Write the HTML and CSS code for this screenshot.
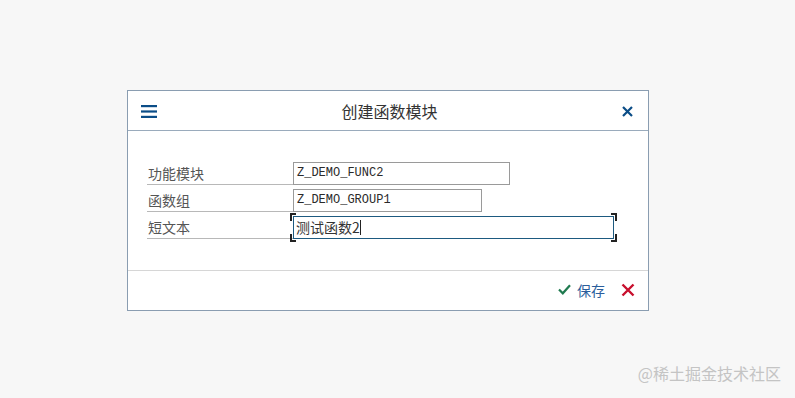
FILE: index.html
```html
<!DOCTYPE html>
<html lang="zh">
<head>
<meta charset="utf-8">
<title>创建函数模块</title>
<link rel="stylesheet" href="styles.css">
</head>
<body>
<div class="dialog">
  <div class="header">
    <svg class="menu" width="16" height="13" viewBox="0 0 16 13"><rect x="0" y="0" width="16" height="2.2" fill="#0b4d87"/><rect x="0" y="5.4" width="16" height="2.2" fill="#0b4d87"/><rect x="0" y="10.8" width="16" height="2.2" fill="#0b4d87"/></svg>
    <div class="title">创建函数模块</div>
    <svg class="close" width="11" height="11" viewBox="0 0 11 11"><path d="M1 1L10 10M10 1L1 10" stroke="#0b4d87" stroke-width="2.2" fill="none"/></svg>
  </div>
  <div class="content">
    <div class="row">
      <div class="label">功能模块</div>
      <div class="input w1">Z_DEMO_FUNC2</div>
    </div>
    <div class="row">
      <div class="label">函数组</div>
      <div class="input w2">Z_DEMO_GROUP1</div>
    </div>
    <div class="row">
      <div class="label">短文本</div>
      <div class="input w3 focus"><span class="cjk">测试函数2</span><span class="caret"></span>
        <i class="br tl"></i><i class="br tr"></i><i class="br bl"></i><i class="br bri"></i>
      </div>
    </div>
  </div>
  <div class="footer">
    <div class="save">
      <svg width="13" height="11" viewBox="0 0 13 11"><path d="M1 5.5L4.8 9.3L12 1.2" stroke="#1f7a4f" stroke-width="2.2" fill="none"/></svg>
      <span>保存</span>
    </div>
    <svg class="cancel" width="14" height="14" viewBox="0 0 14 14"><path d="M1.5 1.5L12.5 12.5M12.5 1.5L1.5 12.5" stroke="#c8102e" stroke-width="2.4" fill="none"/></svg>
  </div>
</div>
<div class="watermark">@稀土掘金技术社区</div>
</body>
</html>
```
FILE: styles.css
```css
html, body {
  margin: 0;
  padding: 0;
}
body {
  background: #f7f7f7;
  width: 795px;
  height: 398px;
  position: relative;
  overflow: hidden;
  font-family: "Noto Sans CJK SC", "Noto Sans", sans-serif;
  padding-top: 90px;
  padding-left: 127px;
  box-sizing: border-box;
}
.dialog {
  width: 522px;
  height: 221px;
  box-sizing: border-box;
  border: 1px solid #8a9db1;
  background: #ffffff;
  display: flex;
  flex-direction: column;
}
.header {
  height: 40px;
  box-sizing: border-box;
  border-bottom: 1px solid #9aabbc;
  display: flex;
  align-items: center;
  padding: 0 0 0 13px;
}
.menu {
  display: block;
  margin-top: 1px;
}
.title {
  flex: 1;
  text-align: center;
  font-size: 16px;
  color: #333;
}
.close {
  display: block;
  margin-right: 15px;
  margin-top: 2px;
}
.content {
  flex: 1;
  padding: 31px 0 0 19px;
  display: flex;
  flex-direction: column;
  gap: 4px;
}
.row {
  display: flex;
  align-items: stretch;
  height: 23px;
}
.label {
  width: 146px;
  box-sizing: border-box;
  border-bottom: 1px solid #b8b8b8;
  font-size: 14px;
  color: #555;
  padding-left: 1px;
  line-height: 22px;
}
.input {
  box-sizing: border-box;
  border: 1px solid #9a9a9a;
  height: 23px;
  font-family: "Liberation Mono", "DejaVu Sans Mono", monospace;
  font-size: 12px;
  color: #2a2a2a;
  line-height: 21px;
  padding-left: 3px;
  position: relative;
}
.w1 { width: 217px; }
.w2 { width: 189px; }
.w3 { width: 321px; }
.focus {
  border-color: #1d5a80;
  padding-left: 2px;
}
.cjk {
  font-family: "Noto Sans CJK SC", sans-serif;
  font-size: 14px;
  color: #333;
}
.caret {
  display: inline-block;
  width: 1px;
  height: 15px;
  background: #222;
  vertical-align: -2px;
}
.br {
  position: absolute;
  width: 4px;
  height: 6px;
  border: 0 solid #222;
}
.tl { left: -4px; top: -4px; border-left-width: 2px; border-top-width: 2px; }
.tr { right: -4px; top: -4px; border-right-width: 2px; border-top-width: 2px; }
.bl { left: -4px; bottom: -4px; border-left-width: 2px; border-bottom-width: 2px; }
.bri { right: -4px; bottom: -4px; border-right-width: 2px; border-bottom-width: 2px; }
.footer {
  height: 40px;
  box-sizing: border-box;
  border-top: 1px solid #d6d6d6;
  display: flex;
  align-items: center;
  justify-content: flex-end;
  padding-right: 13px;
  padding-bottom: 2px;
  gap: 16px;
}
.save {
  display: flex;
  align-items: center;
  gap: 6px;
  color: #2b5e9c;
  font-size: 14px;
}
.save svg { display: block; }
.cancel { display: block; }
.watermark {
  position: absolute;
  right: 14px;
  bottom: 13px;
  font-size: 16px;
  color: #c4c4c4;
}
```
